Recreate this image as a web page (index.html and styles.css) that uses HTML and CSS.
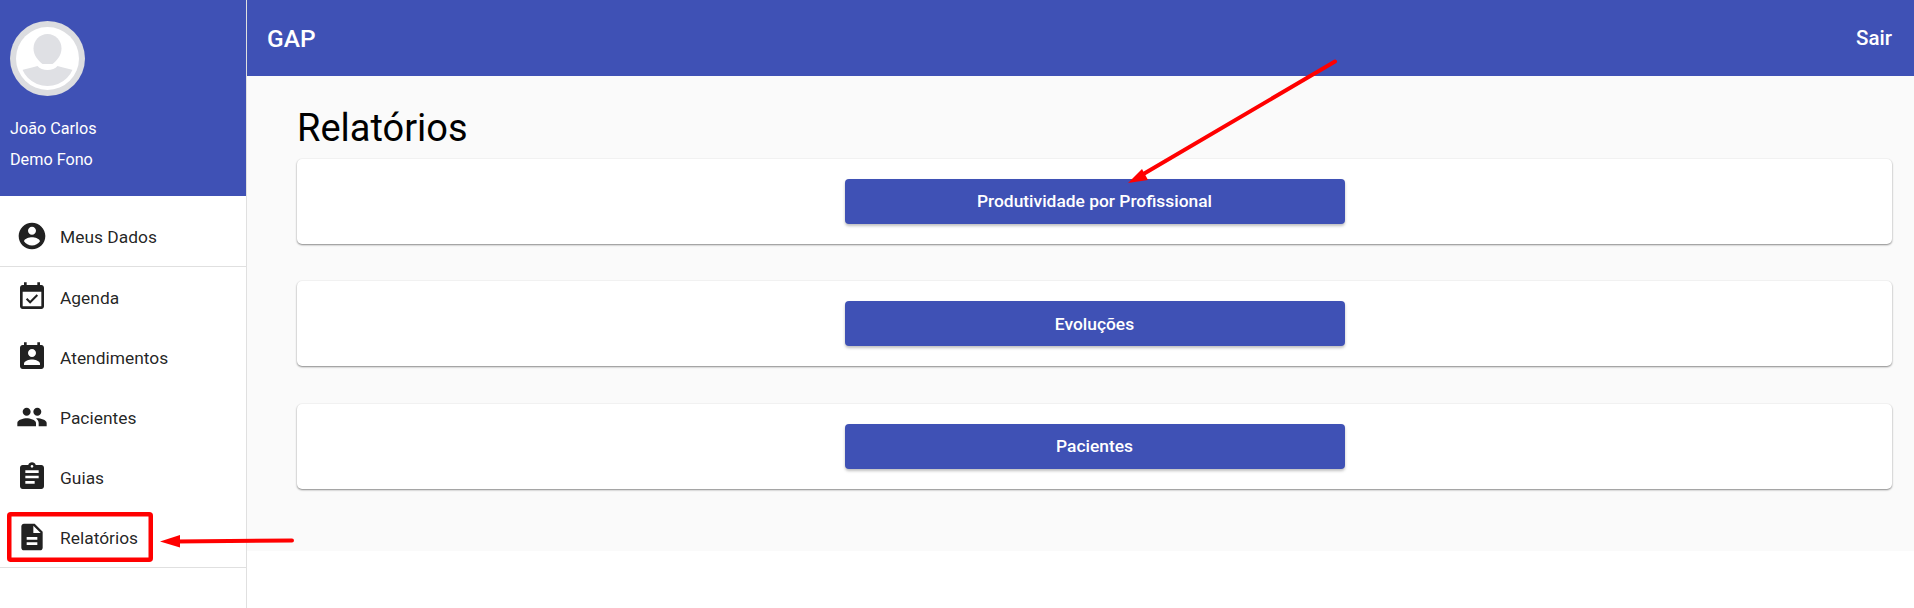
FILE: index.html
```html
<!DOCTYPE html>
<html lang="pt-BR">
<head>
    <meta charset="UTF-8">
    <meta name="viewport" content="width=device-width, initial-scale=1.0">
    <title>GAP - Relatórios</title>
    <link rel="stylesheet" href="styles.css">
</head>
<body>
    <aside class="sidebar">
        <div class="profile">
            <svg class="avatar" viewBox="0 0 75 75">
                <defs>
                    <clipPath id="avatar-clip"><circle cx="37.5" cy="37.5" r="27.5"/></clipPath>
                </defs>
                <circle cx="37.5" cy="37.5" r="37.5" fill="#dcdde0"/>
                <circle cx="37.5" cy="37.5" r="31.5" fill="#fff"/>
                <path d="M37.5 13c8 0 14 6.500 14 14.500 0 7-5 12.500-9 15.500h-10c-4-3-9-8.500-9-15.500 0-8 6-14.500 14-14.500z" fill="#dfe0e4"/>
                <path d="M12 49c5-1.500 11-2.500 15.500-4 2 2.500 6 4 10 4s8-1.500 10-4c4.500 1.500 10.500 2.500 15.500 4v20H12z" fill="#dfe0e4" clip-path="url(#avatar-clip)"/>
            </svg>
            <p class="profile-name">João Carlos</p>
            <p class="profile-name">Demo Fono</p>
        </div>
        <nav>
            <ul class="menu menu-account">
                <li class="menu-item">
                    <svg class="menu-icon" viewBox="0 0 24 24"><path d="M12 2C6.480 2 2 6.480 2 12s4.480 10 10 10 10-4.480 10-10S17.520 2 12 2zm0 3c1.660 0 3 1.340 3 3s-1.340 3-3 3-3-1.340-3-3 1.340-3 3-3zm0 14.200c-2.500 0-4.710-1.280-6-3.220.03-1.990 4-3.080 6-3.080 1.990 0 5.970 1.090 6 3.080-1.290 1.940-3.500 3.220-6 3.220z"/></svg>
                    <span class="menu-label">Meus Dados</span>
                </li>
            </ul>
            <ul class="menu">
                <li class="menu-item">
                    <svg class="menu-icon" viewBox="0 0 24 24"><path d="M16.530 11.060L15.470 10l-4.880 4.880-2.120-2.120-1.060 1.060L10.590 17l5.940-5.940zM19 3h-1V1h-2v2H8V1H6v2H5c-1.110 0-1.990.9-1.990 2L3 19c0 1.100.89 2 2 2h14c1.100 0 2-.9 2-2V5c0-1.100-.9-2-2-2zm0 16H5V8h14v11z"/></svg>
                    <span class="menu-label">Agenda</span>
                </li>
                <li class="menu-item">
                    <svg class="menu-icon" viewBox="0 0 24 24"><path d="M19 3h-1V1h-2v2H8V1H6v2H5c-1.110 0-2 .9-2 2v14c0 1.100.89 2 2 2h14c1.100 0 2-.9 2-2V5c0-1.100-.9-2-2-2zm-7 3c1.660 0 3 1.340 3 3s-1.340 3-3 3-3-1.340-3-3 1.340-3 3-3zm6 12H6v-1c0-2 4-3.100 6-3.100s6 1.100 6 3.100v1z"/></svg>
                    <span class="menu-label">Atendimentos</span>
                </li>
                <li class="menu-item">
                    <svg class="menu-icon" viewBox="0 0 24 24"><path d="M16 11c1.660 0 2.990-1.340 2.990-3S17.660 5 16 5c-1.660 0-3 1.340-3 3s1.340 3 3 3zm-8 0c1.660 0 2.990-1.340 2.990-3S9.660 5 8 5C6.340 5 5 6.340 5 8s1.340 3 3 3zm0 2c-2.330 0-7 1.170-7 3.500V19h14v-2.500c0-2.330-4.670-3.500-7-3.500zm8 0c-.29 0-.62.02-.97.05 1.160.84 1.970 1.970 1.970 3.450V19h6v-2.500c0-2.330-4.670-3.500-7-3.500z"/></svg>
                    <span class="menu-label">Pacientes</span>
                </li>
                <li class="menu-item">
                    <svg class="menu-icon" viewBox="0 0 24 24"><path d="M19 3h-4.180C14.400 1.840 13.300 1 12 1c-1.300 0-2.400.84-2.820 2H5c-1.100 0-2 .9-2 2v14c0 1.100.9 2 2 2h14c1.100 0 2-.9 2-2V5c0-1.100-.9-2-2-2zm-7 0c.55 0 1 .45 1 1s-.45 1-1 1-1-.45-1-1 .45-1 1-1zm2 14H7v-2h7v2zm3-4H7v-2h10v2zm0-4H7V7h10v2z"/></svg>
                    <span class="menu-label">Guias</span>
                </li>
                <li class="menu-item">
                    <svg class="menu-icon" viewBox="0 0 24 24"><path d="M14 2H6c-1.100 0-1.990.9-1.990 2L4 20c0 1.100.89 2 1.990 2H18c1.100 0 2-.9 2-2V8l-6-6zm2 16H8v-2h8v2zm0-4H8v-2h8v2zm-3-5V3.500L18.500 9H13z"/></svg>
                    <span class="menu-label">Relatórios</span>
                </li>
            </ul>
        </nav>
    </aside>

    <div class="content">
        <header class="toolbar">
            <span class="brand">GAP</span>
            <a class="logout">Sair</a>
        </header>
        <main class="page">
            <h1 class="page-title">Relatórios</h1>
            <section class="card"><button class="report-button">Produtividade por Profissional</button></section>
            <section class="card"><button class="report-button">Evoluções</button></section>
            <section class="card"><button class="report-button">Pacientes</button></section>
        </main>
    </div>

    <!-- Red marks drawn over the screen -->
    <svg class="annotations" viewBox="0 0 1914 608">
        <rect x="9.250" y="514.250" width="141.500" height="45.500" rx="1.500" fill="none" stroke="#f00" stroke-width="4.500"/>
        <path d="M292 540.500L176 541.500" fill="none" stroke="#f00" stroke-width="4" stroke-linecap="round"/>
        <path d="M160 541.500L180 535V547.500z" fill="#f00"/>
        <path d="M1335 61.500L1140 176" fill="none" stroke="#f00" stroke-width="4" stroke-linecap="round"/>
        <path d="M1128 183L1142 169L1148 180z" fill="#f00"/>
    </svg>
</body>
</html>
```

FILE: styles.css
```css
* {
    box-sizing: border-box;
}
body {
    display: flex;
    height: 608px;
    margin: 0;
    overflow: hidden;
    font-family: Roboto, "Liberation Sans", sans-serif;
    background-color: white;
    color: rgba(0, 0, 0, 0.87);
}
.sidebar {
    width: 247px;
    flex-shrink: 0;
    border-right: 1px solid #e0e0e0;
}
.profile {
    height: 196px;
    padding: 21px 10px 0;
    background-color: #3f51b5;
    color: white;
}
.avatar {
    display: block;
    width: 75px;
    height: 75px;
    margin-bottom: 17px;
}
.profile-name {
    margin: 0;
    font-size: 16.2px;
    line-height: 31px;
}
.menu {
    margin: 0;
    padding: 0;
    list-style: none;
    border-bottom: 1px solid #e0e0e0;
}
.menu-account {
    padding-top: 10px;
}
.menu-item {
    display: flex;
    align-items: center;
    height: 60px;
    padding-left: 16px;
    font-size: 17.4px;
}
.menu-icon {
    width: 32px;
    height: 32px;
    margin-right: 12px;
    fill: #212121;
}
.menu-label {
    padding-top: 1px;
}
.content {
    flex: 1;
    min-width: 0;
}
.toolbar {
    display: flex;
    align-items: center;
    justify-content: space-between;
    height: 76px;
    padding: 0 22px 0 20px;
    background-color: #3f51b5;
    color: white;
}
.brand {
    font-size: 24.500px;
    font-weight: 500;
}
.logout {
    font-size: 20.500px;
    font-weight: 500;
}
.page {
    height: 475px;
    padding: 0 22px 0 50px;
    background-color: #fafafa;
}
.page-title {
    height: 82.800px;
    margin: 0;
    padding-top: 31px;
    font-size: 38px;
    line-height: 42px;
    font-weight: 450;
    color: black;
}
.card {
    display: flex;
    justify-content: center;
    height: 85px;
    margin-bottom: 37.500px;
    padding-top: 20px;
    background-color: white;
    border-radius: 5px;
    box-shadow: 0 1px 2px rgba(0, 0, 0, 0.45), 0 0 2px rgba(0, 0, 0, 0.06);
}
.report-button {
    width: 500px;
    height: 45px;
    padding-top: 1px;
    border: none;
    border-radius: 4px;
    background-color: #3f51b5;
    color: white;
    font-family: inherit;
    font-size: 17.400px;
    font-weight: 500;
    box-shadow: 0 2px 3px rgba(0, 0, 0, 0.25);
}
.annotations {
    position: absolute;
    left: 0;
    top: 0;
    width: 1914px;
    height: 608px;
    pointer-events: none;
}
```
